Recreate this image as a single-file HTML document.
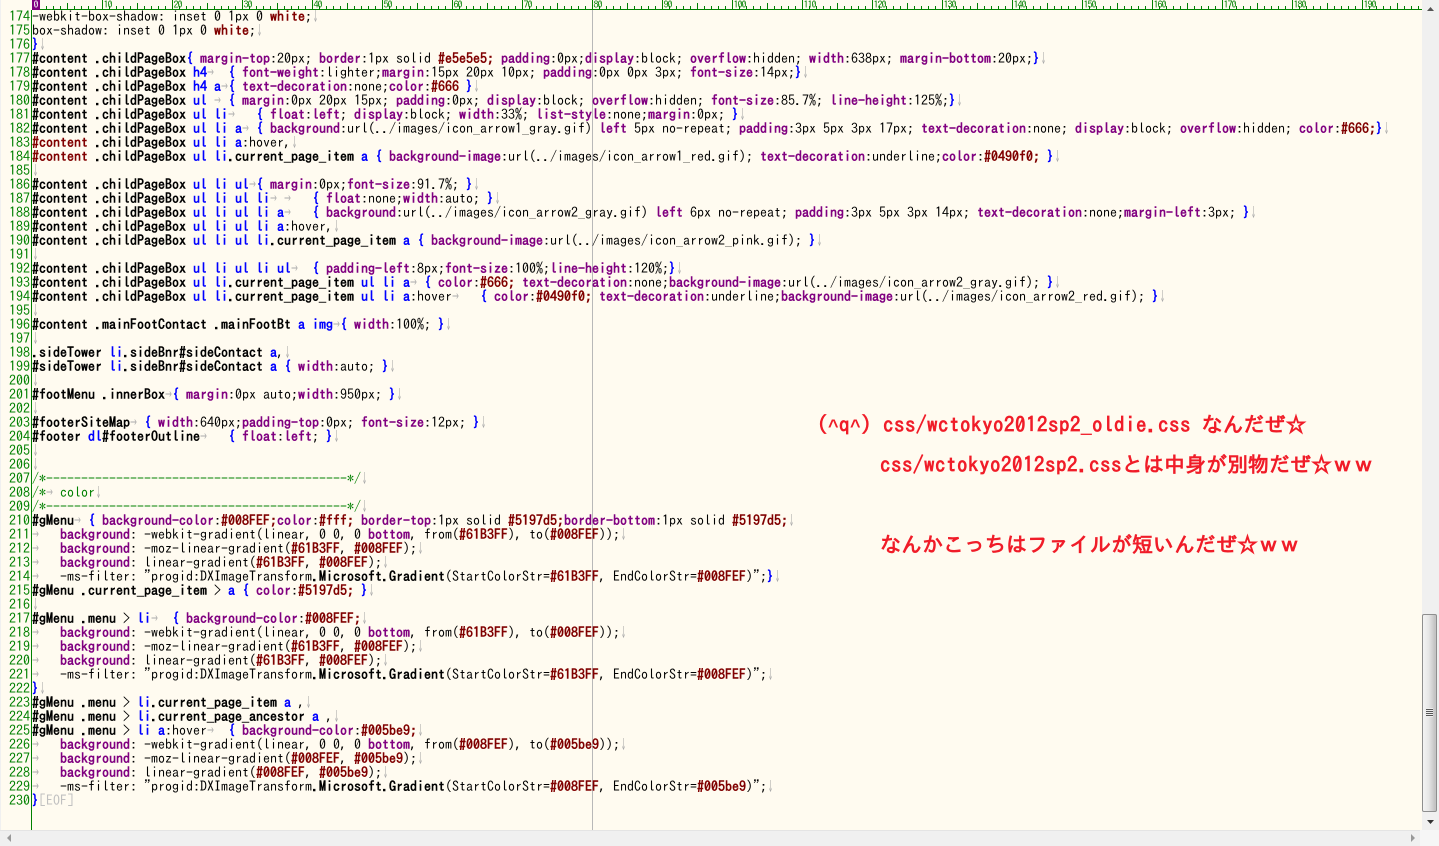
<!DOCTYPE html>
<html lang="ja"><head><meta charset="utf-8"><title>css</title>
<style>
html,body{margin:0;padding:0;width:1439px;height:846px;overflow:hidden;background:#fffbf0}
#ln,#code{position:absolute;top:9px;margin:0;font:14px/14px "IPAGothic","Liberation Mono",monospace;white-space:pre}
#ln{left:0;width:30px;text-align:right;color:#008000}
#code{left:32px;color:#000;width:1390px;overflow:hidden}
#code b,#code i,#code s,#code u,#code em,#code var{font-style:normal;text-decoration:none;font-weight:bold}
#code b{color:#000}
#code s{color:#0000ff}
#code em{color:#800080}
#code i{color:#800000}
#code u{color:#800000}
#code var{color:#008000;font-weight:normal}
tt{display:inline-block;width:14px;margin-right:-7px;transform:scaleX(.5);transform-origin:0 50%;color:#aaa;font:inherit}
#code q{quotes:none;color:#c0c0c0}
.v{position:absolute;top:10px}
.r{position:absolute;font:21px/24px "IPAGothic","Noto Sans CJK JP",monospace;color:#f01c28;white-space:pre;font-weight:bold}
.r span{letter-spacing:.5px}
.r span.c{font:bold 18px/24px "Liberation Mono",monospace;letter-spacing:.2px}
.sb{position:absolute;background:#f0f0f0}
</style></head><body>
<svg style="position:absolute;left:0;top:0" width="1422" height="10">
<defs><pattern id="t" x="32" y="0" width="70" height="10" patternUnits="userSpaceOnUse">
<path d="M.5 0V10M7.5 6V10M14.5 6V10M21.5 6V10M28.5 6V10M35.5 3V10M42.5 6V10M49.5 6V10M56.5 6V10M63.5 6V10" stroke="#008000" stroke-width="1" fill="none"/></pattern></defs>
<rect x="32" y="0" width="1390" height="10" fill="url(#t)"/>
<rect x="32" y="9" width="1390" height="1" fill="#008000"/>
<rect x="32" y="0" width="8" height="10" fill="#800080"/>
<g font-family="IPAGothic,monospace" font-size="10" letter-spacing="-1" fill="#008000">
<text x="33.5" y="8" fill="#fff">0</text>
<text x="103.500" y="8">10</text><text x="173.500" y="8">20</text><text x="243.500" y="8">30</text><text x="313.500" y="8">40</text><text x="383.500" y="8">50</text><text x="453.500" y="8">60</text><text x="523.500" y="8">70</text><text x="593.500" y="8">80</text><text x="663.500" y="8">90</text><text x="733.500" y="8">100</text><text x="803.500" y="8">110</text><text x="873.500" y="8">120</text><text x="943.500" y="8">130</text><text x="1013.500" y="8">140</text><text x="1083.500" y="8">150</text><text x="1153.500" y="8">160</text><text x="1223.500" y="8">170</text><text x="1293.500" y="8">180</text><text x="1363.500" y="8">190</text></g>
</svg>
<div class="v" style="left:31px;width:1px;height:820px;background:#008000"></div>
<div class="v" style="left:592px;width:1px;height:820px;background:#b8b8b8"></div>
<pre id="ln">174
175
176
177
178
179
180
181
182
183
184
185
186
187
188
189
190
191
192
193
194
195
196
197
198
199
200
201
202
203
204
205
206
207
208
209
210
211
212
213
214
215
216
217
218
219
220
221
222
223
224
225
226
227
228
229
230</pre>
<pre id="code">-webkit-box-shadow: inset 0 1px 0 <i>white</i>;<tt>↓</tt>
box-shadow: inset 0 1px 0 <i>white</i>;<tt>↓</tt>
<s>}</s><tt>↓</tt>
<b>#content .childPageBox</b><s>{</s> <em>margin-top</em>:20px; <em>border</em>:1px solid <i>#e5e5e5;</i> <em>padding</em>:0px;<em>display</em>:block; <em>overflow</em>:hidden; <em>width</em>:638px; <em>margin-bottom</em>:20px;<s>}</s><tt>↓</tt>
<b>#content .childPageBox</b> <s>h4</s><tt>→</tt>  <s>{</s> <em>font-weight</em>:lighter;<em>margin</em>:15px 20px 10px; <em>padding</em>:0px 0px 3px; <em>font-size</em>:14px;<s>}</s><tt>↓</tt>
<b>#content .childPageBox</b> <s>h4 a</s><tt>→</tt><s>{</s> <em>text-decoration</em>:none;<em>color</em>:<i>#666</i> <s>}</s><tt>↓</tt>
<b>#content .childPageBox</b> <s>ul</s> <tt>→</tt> <s>{</s> <em>margin</em>:0px 20px 15px; <em>padding</em>:0px; <em>display</em>:block; <em>overflow</em>:hidden; <em>font-size</em>:85.7%; <em>line-height</em>:125%;<s>}</s><tt>↓</tt>
<b>#content .childPageBox</b> <s>ul li</s><tt>→</tt>   <s>{</s> <em>float</em>:<em>left</em>; <em>display</em>:block; <em>width</em>:33%; <em>list-style</em>:none;<em>margin</em>:0px; <s>}</s><tt>↓</tt>
<b>#content .childPageBox</b> <s>ul li a</s><tt>→</tt> <s>{</s> <em>background</em>:url(../images/icon_arrow1_gray.gif) <em>left</em> 5px no-repeat; <em>padding</em>:3px 5px 3px 17px; <em>text-decoration</em>:none; <em>display</em>:block; <em>overflow</em>:hidden; <em>color</em>:<i>#666;</i><s>}</s><tt>↓</tt>
<u>#content</u> <b>.childPageBox</b> <s>ul li a</s>:hover,<tt>↓</tt>
<u>#content</u> <b>.childPageBox</b> <s>ul li</s><b>.current_page_item</b> <s>a</s> <s>{</s> <em>background-image</em>:url(../images/icon_arrow1_red.gif); <em>text-decoration</em>:underline;<em>color</em>:<i>#0490f0;</i> <s>}</s><tt>↓</tt>
<tt>↓</tt>
<b>#content .childPageBox</b> <s>ul li ul</s><tt>→</tt><s>{</s> <em>margin</em>:0px;<em>font-size</em>:91.7%; <s>}</s><tt>↓</tt>
<b>#content .childPageBox</b> <s>ul li ul li</s><tt>→</tt> <tt>→</tt>   <s>{</s> <em>float</em>:none;<em>width</em>:auto; <s>}</s><tt>↓</tt>
<b>#content .childPageBox</b> <s>ul li ul li a</s><tt>→</tt>   <s>{</s> <em>background</em>:url(../images/icon_arrow2_gray.gif) <em>left</em> 6px no-repeat; <em>padding</em>:3px 5px 3px 14px; <em>text-decoration</em>:none;<em>margin-left</em>:3px; <s>}</s><tt>↓</tt>
<b>#content .childPageBox</b> <s>ul li ul li a</s>:hover,<tt>↓</tt>
<b>#content .childPageBox</b> <s>ul li ul li</s><b>.current_page_item</b> <s>a</s> <s>{</s> <em>background-image</em>:url(../images/icon_arrow2_pink.gif); <s>}</s><tt>↓</tt>
<tt>↓</tt>
<b>#content .childPageBox</b> <s>ul li ul li ul</s><tt>→</tt>  <s>{</s> <em>padding-left</em>:8px;<em>font-size</em>:100%;<em>line-height</em>:120%;<s>}</s><tt>↓</tt>
<b>#content .childPageBox</b> <s>ul li</s><b>.current_page_item</b> <s>ul li a</s><tt>→</tt> <s>{</s> <em>color</em>:<i>#666;</i> <em>text-decoration</em>:none;<em>background-image</em>:url(../images/icon_arrow2_gray.gif); <s>}</s><tt>↓</tt>
<b>#content .childPageBox</b> <s>ul li</s><b>.current_page_item</b> <s>ul li a</s>:hover<tt>→</tt>   <s>{</s> <em>color</em>:<i>#0490f0;</i> <em>text-decoration</em>:underline;<em>background-image</em>:url(../images/icon_arrow2_red.gif); <s>}</s><tt>↓</tt>
<tt>↓</tt>
<b>#content .mainFootContact .mainFootBt</b> <s>a img</s><tt>→</tt><s>{</s> <em>width</em>:100%; <s>}</s><tt>↓</tt>
<tt>↓</tt>
<b>.sideTower</b> <s>li</s><b>.sideBnr#sideContact</b> <s>a</s>,<tt>↓</tt>
<b>#sideTower</b> <s>li</s><b>.sideBnr#sideContact</b> <s>a</s> <s>{</s> <em>width</em>:auto; <s>}</s><tt>↓</tt>
<tt>↓</tt>
<b>#footMenu .innerBox</b><tt>→</tt><s>{</s> <em>margin</em>:0px auto;<em>width</em>:950px; <s>}</s><tt>↓</tt>
<tt>↓</tt>
<b>#footerSiteMap</b><tt>→</tt> <s>{</s> <em>width</em>:640px;<em>padding-top</em>:0px; <em>font-size</em>:12px; <s>}</s><tt>↓</tt>
<b>#footer</b> <s>dl</s><b>#footerOutline</b><tt>→</tt>   <s>{</s> <em>float</em>:<em>left</em>; <s>}</s><tt>↓</tt>
<tt>↓</tt>
<tt>↓</tt>
<var>/*-------------------------------------------*/</var><tt>↓</tt>
<var>/*</var><tt>→</tt> <var>color</var><tt>↓</tt>
<var>/*-------------------------------------------*/</var><tt>↓</tt>
<b>#gMenu</b><tt>→</tt> <s>{</s> <em>background-color</em>:<i>#008FEF;</i><em>color</em>:<i>#fff;</i> <em>border-top</em>:1px solid <i>#5197d5;</i><em>border-bottom</em>:1px solid <i>#5197d5;</i><tt>↓</tt>
<tt>→</tt>   <em>background</em>: -webkit-gradient(linear, 0 0, 0 <em>bottom</em>, from(<i>#61B3FF</i>), to(<i>#008FEF</i>));<tt>↓</tt>
<tt>→</tt>   <em>background</em>: -moz-linear-gradient(<i>#61B3FF</i>, <i>#008FEF</i>);<tt>↓</tt>
<tt>→</tt>   <em>background</em>: linear-gradient(<i>#61B3FF</i>, <i>#008FEF</i>);<tt>↓</tt>
<tt>→</tt>   -ms-filter: "progid:DXImageTransform<b>.Microsoft.Gradient</b>(StartColorStr=<i>#61B3FF</i>, EndColorStr=<i>#008FEF</i>)";<s>}</s><tt>↓</tt>
<b>#gMenu .current_page_item</b> &gt; <s>a</s> <s>{</s> <em>color</em>:<i>#5197d5;</i> <s>}</s><tt>↓</tt>
<tt>↓</tt>
<b>#gMenu .menu</b> &gt; <s>li</s><tt>→</tt>  <s>{</s> <em>background-color</em>:<i>#008FEF;</i><tt>↓</tt>
<tt>→</tt>   <em>background</em>: -webkit-gradient(linear, 0 0, 0 <em>bottom</em>, from(<i>#61B3FF</i>), to(<i>#008FEF</i>));<tt>↓</tt>
<tt>→</tt>   <em>background</em>: -moz-linear-gradient(<i>#61B3FF</i>, <i>#008FEF</i>);<tt>↓</tt>
<tt>→</tt>   <em>background</em>: linear-gradient(<i>#61B3FF</i>, <i>#008FEF</i>);<tt>↓</tt>
<tt>→</tt>   -ms-filter: "progid:DXImageTransform<b>.Microsoft.Gradient</b>(StartColorStr=<i>#61B3FF</i>, EndColorStr=<i>#008FEF</i>)";<tt>↓</tt>
<s>}</s><tt>↓</tt>
<b>#gMenu .menu</b> &gt; <s>li</s><b>.current_page_item</b> <s>a</s> ,<tt>↓</tt>
<b>#gMenu .menu</b> &gt; <s>li</s><b>.current_page_ancestor</b> <s>a</s> ,<tt>↓</tt>
<b>#gMenu .menu</b> &gt; <s>li a</s>:hover<tt>→</tt>  <s>{</s> <em>background-color</em>:<i>#005be9;</i><tt>↓</tt>
<tt>→</tt>   <em>background</em>: -webkit-gradient(linear, 0 0, 0 <em>bottom</em>, from(<i>#008FEF</i>), to(<i>#005be9</i>));<tt>↓</tt>
<tt>→</tt>   <em>background</em>: -moz-linear-gradient(<i>#008FEF</i>, <i>#005be9</i>);<tt>↓</tt>
<tt>→</tt>   <em>background</em>: linear-gradient(<i>#008FEF</i>, <i>#005be9</i>);<tt>↓</tt>
<tt>→</tt>   -ms-filter: "progid:DXImageTransform<b>.Microsoft.Gradient</b>(StartColorStr=<i>#008FEF</i>, EndColorStr=<i>#005be9</i>)";<tt>↓</tt>
<s>}</s><q>[EOF]</q></pre>
<div class="r" style="left:817px;top:413px"><span>(</span><span class="c">^</span><span>q</span><span class="c">^</span><span>) css/wctokyo2012sp2_oldie.css</span> なんだぜ☆</div>
<div class="r" style="left:880px;top:453px"><span>css/wctokyo2012sp2.css</span>とは中身が別物だぜ☆ｗｗ</div>
<div class="r" style="left:880px;top:533px">なんかこっちはファイルが短いんだぜ☆ｗｗ</div>
<div class="sb" style="left:0;top:0;width:1px;height:846px"></div>
<div class="sb" style="left:1422px;top:0;width:17px;height:846px"></div>
<div class="sb" style="left:0;top:830px;width:1439px;height:16px;border-top:1px solid #e4e4e4;box-sizing:border-box"></div>
<div class="sb" style="left:1420px;top:830px;width:19px;height:16px;background:#f6f6f6"></div>
<div style="position:absolute;left:1422px;top:614px;width:13px;height:196px;border:1px solid #8e8e8e;border-radius:2px;background:linear-gradient(90deg,#f4f4f4,#e6e6e6 45%,#c4c4c4 90%)"></div>
<div style="position:absolute;left:1426px;top:708px;width:7px;height:9px;background:#eee"></div>
<svg style="position:absolute;left:0;top:0;pointer-events:none" width="1439" height="846">
<path d="M1430.500 7l3.500 4h-7z" fill="#555"/>
<path d="M1427 820h7l-3.500 4z" fill="#333"/>
<path d="M7 838l4-4v8z" fill="#999"/>
<path d="M1415 838l-4-4v8z" fill="#999"/>
<path d="M1426 709.500h7M1426 711.500h7M1426 713.500h7M1426 715.500h7" stroke="#555" stroke-width="1"/>
</svg>
</body></html>
